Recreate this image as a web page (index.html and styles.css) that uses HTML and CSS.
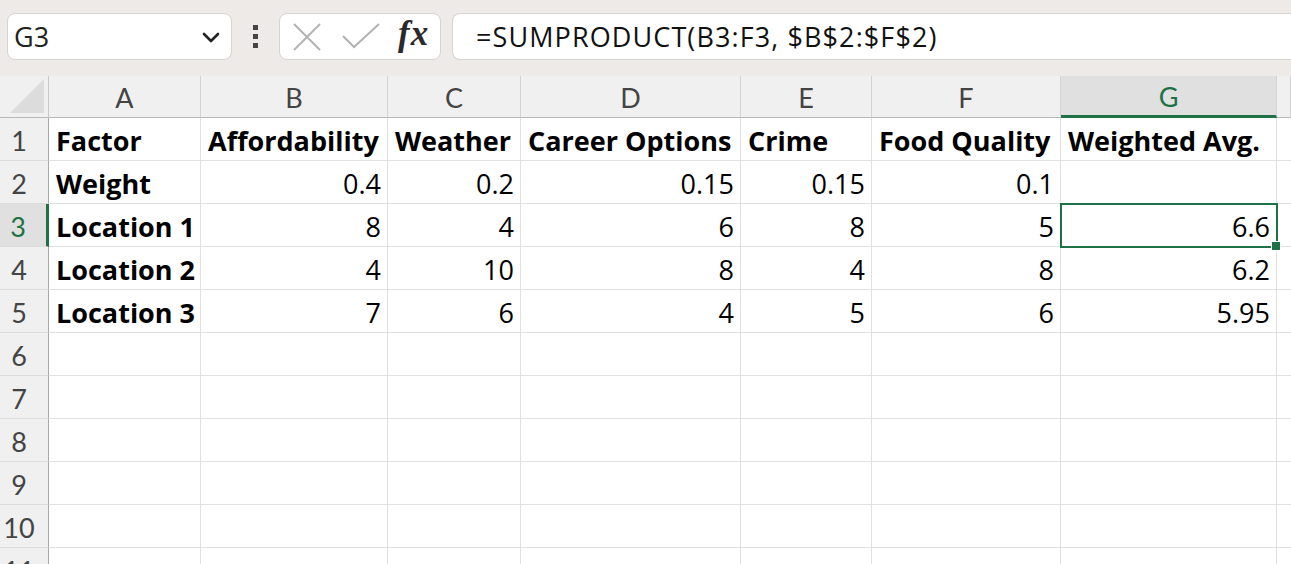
FILE: index.html
```html
<!DOCTYPE html>
<html>
<head>
<meta charset="utf-8">
<link rel="stylesheet" href="styles.css">
</head>
<body>
<div class="app">
  <div class="toolbar">
    <div class="namebox">
      <span class="name">G3</span>
      <svg class="chev" width="18" height="12" viewBox="0 0 18 12"><path d="M2 2 L9 9 L16 2" fill="none" stroke="#222" stroke-width="2.6" stroke-linecap="round" stroke-linejoin="round"/></svg>
    </div>
    <div class="dots"><i></i><i></i><i></i></div>
    <div class="btns">
      <svg class="ico" width="30" height="30" viewBox="0 0 30 30"><path d="M2 2 L28 28 M28 2 L2 28" stroke="#b3b3b3" stroke-width="2"/></svg>
      <svg class="ico" width="38" height="26" viewBox="0 0 38 26"><path d="M1 13 L12 24 L37 1" fill="none" stroke="#b3b3b3" stroke-width="2"/></svg>
      <span class="fx">fx</span>
    </div>
    <div class="formula">=SUMPRODUCT(B3:F3, $B$2:$F$2)</div>
  </div>
  <div class="sheet">
    <div class="ch corner"><span class="tri"></span></div>
    <div class="ch">A</div><div class="ch">B</div><div class="ch">C</div><div class="ch">D</div><div class="ch">E</div><div class="ch">F</div><div class="ch sel">G</div><div class="ch"></div>

    <div class="rh">1</div>
    <div class="c b">Factor</div><div class="c b">Affordability</div><div class="c b">Weather</div><div class="c b">Career Options</div><div class="c b">Crime</div><div class="c b">Food Quality</div><div class="c b">Weighted Avg.</div><div class="c"></div>

    <div class="rh">2</div>
    <div class="c b">Weight</div><div class="c n">0.4</div><div class="c n">0.2</div><div class="c n">0.15</div><div class="c n">0.15</div><div class="c n">0.1</div><div class="c"></div><div class="c"></div>

    <div class="rh sel">3</div>
    <div class="c b">Location 1</div><div class="c n">8</div><div class="c n">4</div><div class="c n">6</div><div class="c n">8</div><div class="c n">5</div><div class="c n active">6.6</div><div class="c"></div>

    <div class="rh">4</div>
    <div class="c b">Location 2</div><div class="c n">4</div><div class="c n">10</div><div class="c n">8</div><div class="c n">4</div><div class="c n">8</div><div class="c n">6.2</div><div class="c"></div>

    <div class="rh">5</div>
    <div class="c b">Location 3</div><div class="c n">7</div><div class="c n">6</div><div class="c n">4</div><div class="c n">5</div><div class="c n">6</div><div class="c n">5.95</div><div class="c"></div>

    <div class="rh">6</div>
    <div class="c"></div><div class="c"></div><div class="c"></div><div class="c"></div><div class="c"></div><div class="c"></div><div class="c"></div><div class="c"></div>
    <div class="rh">7</div>
    <div class="c"></div><div class="c"></div><div class="c"></div><div class="c"></div><div class="c"></div><div class="c"></div><div class="c"></div><div class="c"></div>
    <div class="rh">8</div>
    <div class="c"></div><div class="c"></div><div class="c"></div><div class="c"></div><div class="c"></div><div class="c"></div><div class="c"></div><div class="c"></div>
    <div class="rh">9</div>
    <div class="c"></div><div class="c"></div><div class="c"></div><div class="c"></div><div class="c"></div><div class="c"></div><div class="c"></div><div class="c"></div>
    <div class="rh">10</div>
    <div class="c"></div><div class="c"></div><div class="c"></div><div class="c"></div><div class="c"></div><div class="c"></div><div class="c"></div><div class="c"></div>
    <div class="rh">11</div>
    <div class="c"></div><div class="c"></div><div class="c"></div><div class="c"></div><div class="c"></div><div class="c"></div><div class="c"></div><div class="c"></div>
  </div>
</div>
</body>
</html>
```
FILE: styles.css
```css
* { box-sizing: border-box; }
html, body { margin: 0; padding: 0; }
body { width: 1291px; height: 564px; overflow: hidden; background: #fff; font-family: "Lato", "Noto Sans", sans-serif; }
.app { width: 1291px; height: 564px; overflow: hidden; }

.toolbar {
  height: 76px;
  background: #eeeae8;
  display: flex;
  align-items: flex-start;
  padding: 13px 0 0 7px;
}
.namebox {
  width: 225px; height: 47px;
  background: #fff;
  border: 1px solid #d6d3d1;
  border-radius: 8px;
  display: flex; align-items: center; justify-content: space-between;
  padding: 0 11px 0 6px;
}
.name { font-family: "Open Sans", sans-serif; font-size: 27px; color: #222; }
.chev { margin-top: 2px; }
.dots { width: 47px; height: 47px; display: flex; flex-direction: column; align-items: center; justify-content: center; gap: 4px; }
.dots i { display: block; width: 5px; height: 5px; background: #444; }
.btns {
  width: 162px; height: 47px;
  background: #fff;
  border: 1px solid #d6d3d1;
  border-radius: 8px;
  display: flex; align-items: center;
  padding: 0 0 0 12px;
}
.btns .ico:first-child { margin-right: 20px; }
.btns .ico:nth-child(2) { margin-right: 18px; margin-top: -1px; }
.fx { font-family: "Liberation Serif", serif; font-style: italic; font-weight: 700; font-size: 35px; color: #2a2a2a; margin-top: -5px; letter-spacing: 1px; }
.formula {
  margin-left: 11px;
  flex: 1;
  height: 47px;
  background: #fff;
  border: 1px solid #d6d3d1;
  border-right: none;
  border-radius: 8px 0 0 8px;
  padding-left: 23px;
  font-family: "Open Sans", sans-serif;
  font-size: 27px;
  letter-spacing: 1.1px;
  color: #111;
  display: flex; align-items: center;
}

.sheet {
  display: grid;
  grid-template-columns: 49px 152px 187px 133px 220px 131px 189px 216px 14px;
  grid-template-rows: 42px repeat(11, 43px);
}
.ch {
  background: #f0f0f0;
  border-right: 1px solid #d4d4d4;
  border-bottom: 1px solid #b9b9b9;
  display: flex; align-items: center; justify-content: center;
  font-size: 27px; color: #444;
  padding-top: 2px;
}
.ch.corner { position: relative; border-right: 1px solid #c8c8c8; }
.tri {
  position: absolute; right: 4px; bottom: 4px;
  width: 0; height: 0;
  border-left: 34px solid transparent;
  border-bottom: 34px solid #dcdcdc;
}
.ch.sel { background: #e0e0e0; color: #1e7145; border-bottom: 3px solid #1e7145; }
.rh {
  background: #f0f0f0;
  border-right: 1px solid #a8a8a8;
  border-bottom: 1px solid #dcdcdc;
  display: flex; align-items: center; justify-content: center;
  padding: 3px 10px 0 0;
  font-size: 27px; color: #444;
}
.rh.sel { background: #e0e0e0; color: #1e7145; border-right: 3px solid #1e7145; }
.c {
  border-right: 1px solid #e1e1e1;
  border-bottom: 1px solid #e1e1e1;
  display: flex; align-items: center;
  padding: 3px 7px 0 7px;
  font-family: "Open Sans", sans-serif;
  font-size: 27px; color: #000;
  white-space: nowrap;
  overflow: visible;
}
.c.b { font-weight: 700; }
.c.n { justify-content: flex-end; padding-right: 6px; }
.c.active {
  position: relative;
  outline: 2px solid #1e7145;
  outline-offset: -1px;
  z-index: 2;
}
.c.active::after {
  content: "";
  position: absolute;
  right: -5px; bottom: -5px;
  width: 8px; height: 8px;
  background: #1e7145;
  border: 1px solid #fff;
}
```
